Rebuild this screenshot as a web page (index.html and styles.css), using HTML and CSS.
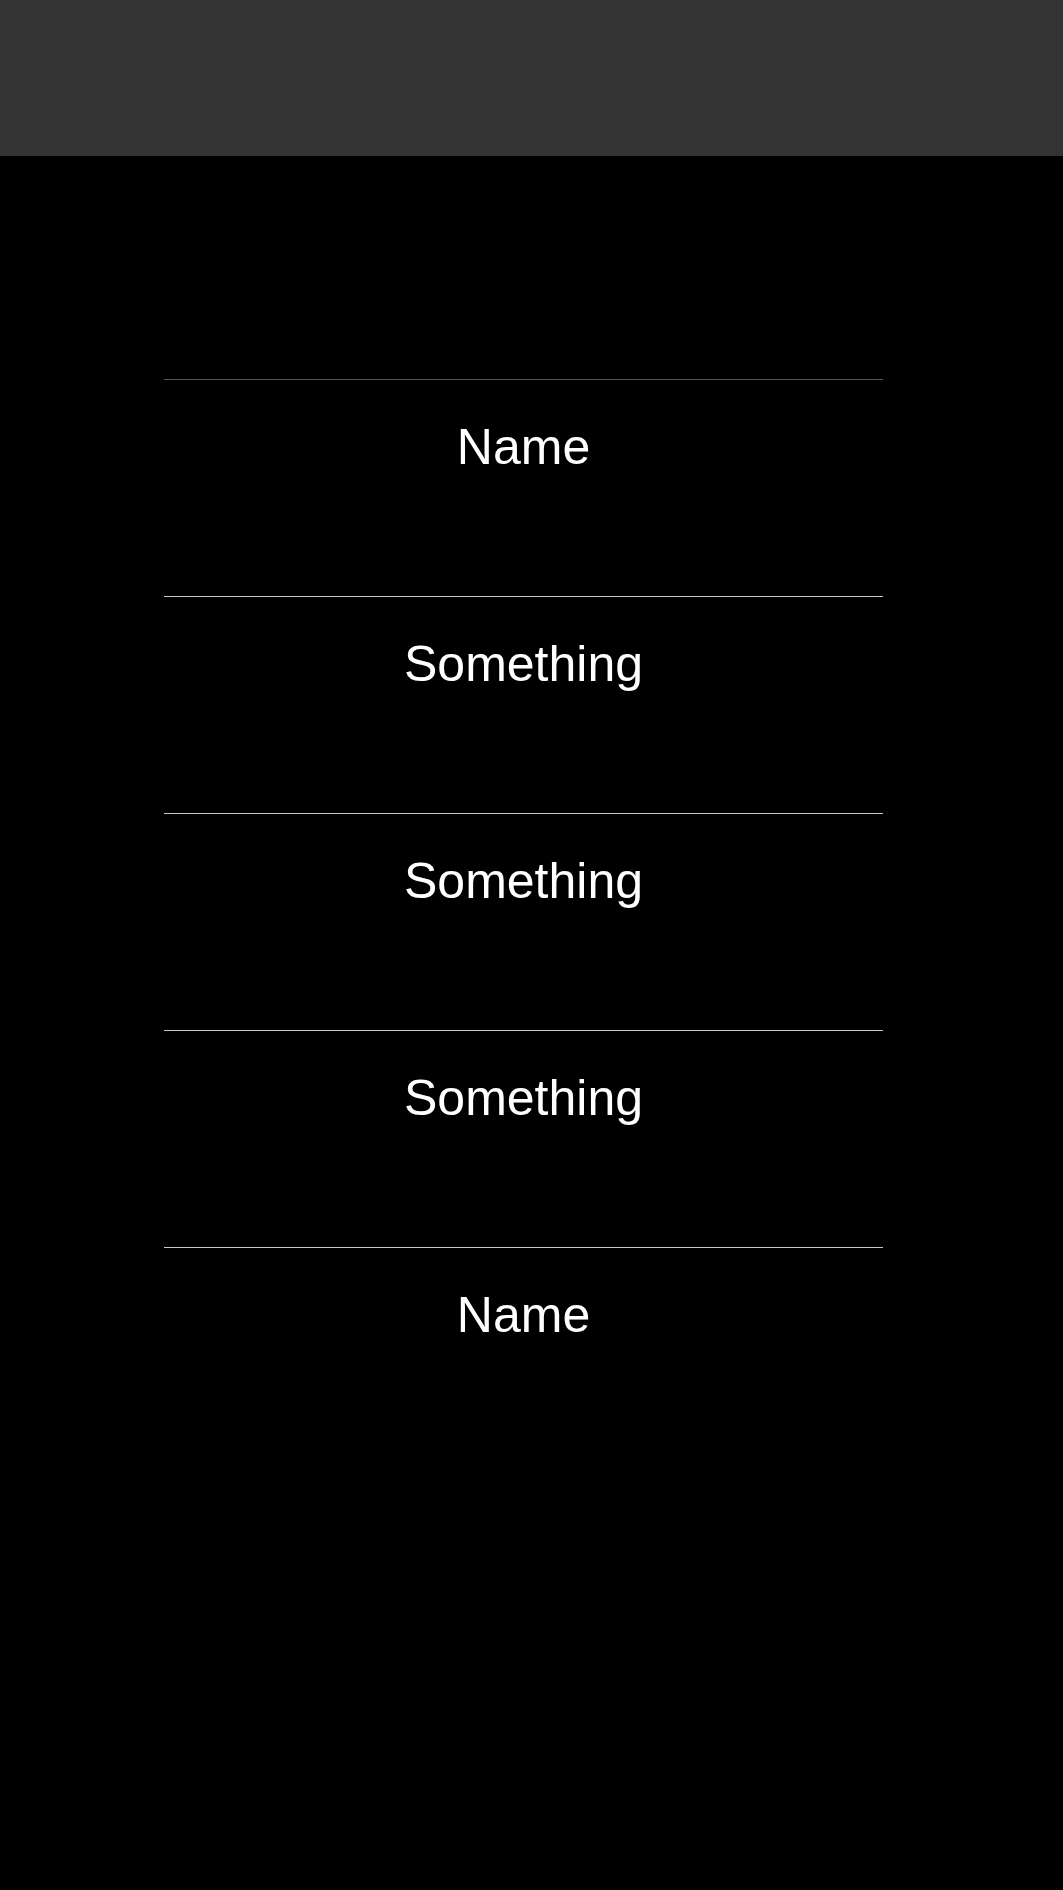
FILE: index.html
```html
<!DOCTYPE html>
<html>
<head>
<meta charset="utf-8">
<link rel="stylesheet" href="styles.css">
</head>
<body>
<header class="topbar"></header>
<main class="list">
  <div class="row row-first"><span class="label">Name</span></div>
  <div class="row"><span class="label">Something</span></div>
  <div class="row"><span class="label">Something</span></div>
  <div class="row"><span class="label">Something</span></div>
  <div class="row"><span class="label">Name</span></div>
</main>
</body>
</html>
```
FILE: styles.css
```css
html, body {
  margin: 0;
  padding: 0;
  background: #000;
  min-height: 1890px;
  font-family: "Liberation Sans", Arial, sans-serif;
}
.topbar {
  height: 156px;
  background: #333333;
}
.list {
  margin: 223px 180px 0 164px;
}
.row {
  border-top: 1px solid #c8c8c8;
  height: 216px;
  box-sizing: content-box;
  padding-top: 0;
  text-align: center;
}
.row-first {
  border-top-color: #4a4f9e;
}
.label {
  display: block;
  padding-top: 38px;
  color: #fff;
  font-size: 50px;
  line-height: normal;
}
```
